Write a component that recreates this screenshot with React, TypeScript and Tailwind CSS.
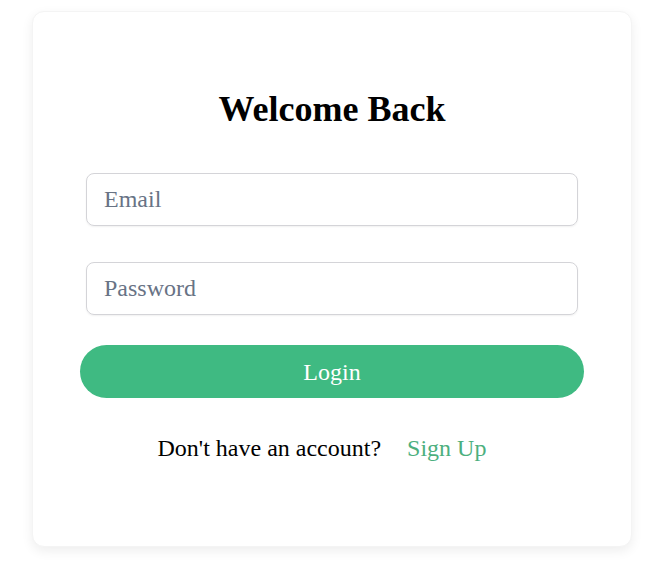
export default function App() {
  return (
    <div className="min-h-[573px] w-[669px] bg-white" style={{ fontFamily: '"Liberation Serif", "Times New Roman", serif' }}>
      <div className="h-[11px]" />
      <div className="ml-[32px] w-[600px] h-[536px] rounded-[12px] bg-white shadow-[0_4px_12px_rgba(0,0,0,0.07)] border border-[#f4f4f4] flex flex-col items-center pt-[77px]">
        <h2 className="text-[36px] font-bold leading-[41px] text-black">Welcome Back</h2>
        <div className="mt-[43px] w-[492px] flex flex-col gap-[36px]">
          <input
            type="email"
            placeholder="Email"
            className="h-[53px] w-full rounded-[8px] border border-[#d4d4d8] px-[17px] text-[24px] text-black placeholder:text-[#687385] shadow-[0_1px_2px_rgba(0,0,0,0.06)] outline-none"
          />
          <input
            type="password"
            placeholder="Password"
            className="h-[53px] w-full rounded-[8px] border border-[#d4d4d8] px-[17px] text-[24px] text-black placeholder:text-[#687385] shadow-[0_1px_2px_rgba(0,0,0,0.06)] outline-none"
          />
        </div>
        <button className="mt-[30px] h-[53px] w-[504px] rounded-full bg-[#3fba82] text-[24px] text-white leading-none">
          Login
        </button>
        <div className="mt-[36px] mr-[20px] flex items-center gap-[26px] text-[24px] leading-[28px]">
          <span className="text-black">Don't have an account?</span>
          <a className="text-[#4caf7e]" href="#">Sign Up</a>
        </div>
      </div>
    </div>
  );
}
